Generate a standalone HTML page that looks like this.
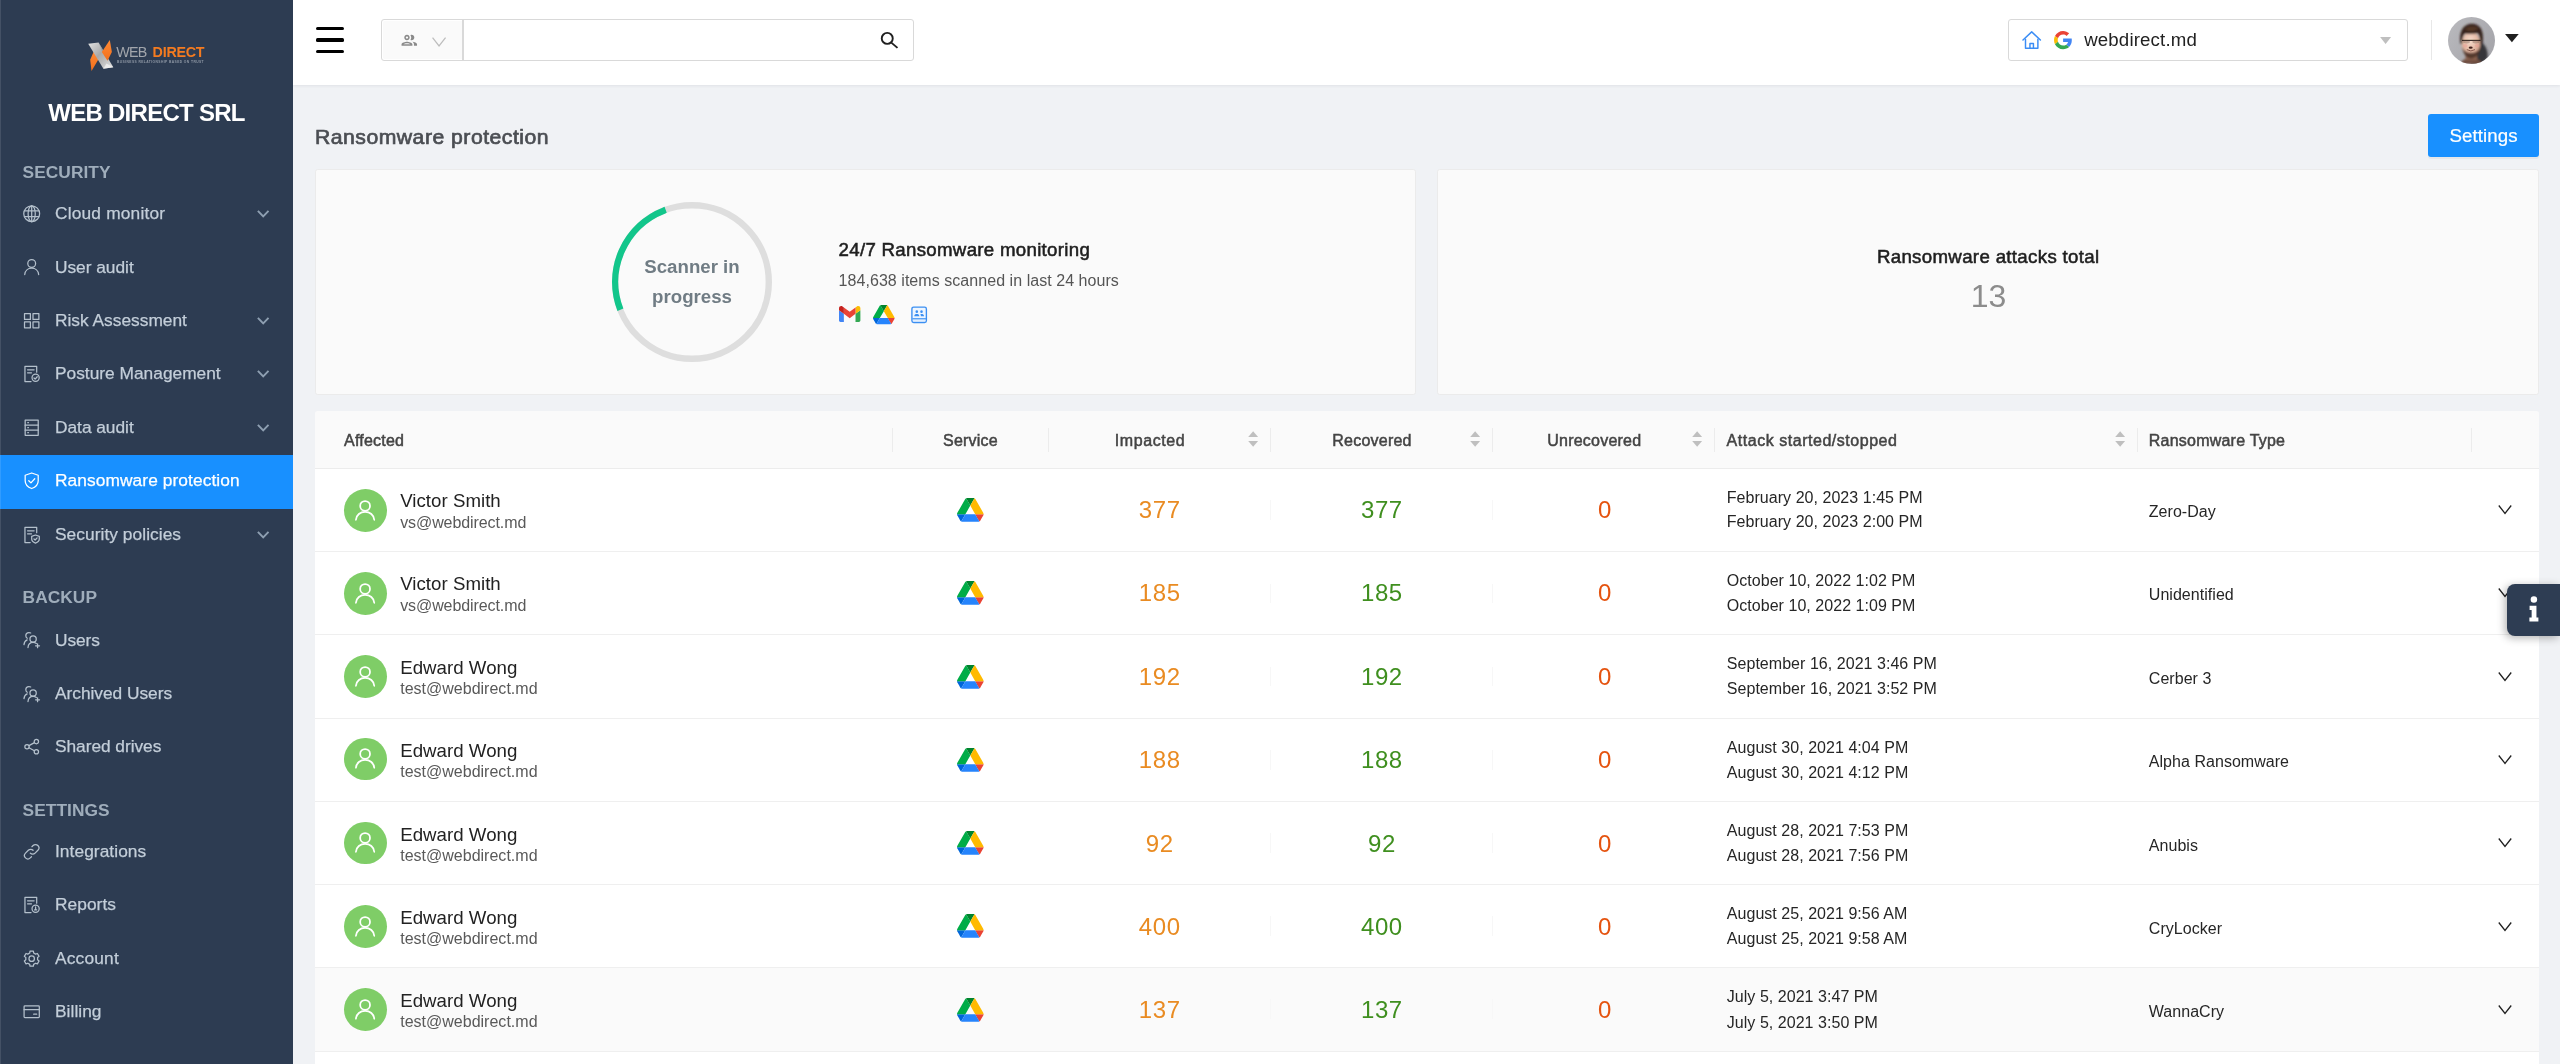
<!DOCTYPE html>
<html lang="en"><head><meta charset="utf-8"><title>Ransomware protection</title>
<style>
*{box-sizing:border-box;margin:0;padding:0}
html,body{width:2560px;height:1064px;overflow:hidden;background:#f0f2f5;font-family:"Liberation Sans",sans-serif}
body{will-change:transform;position:relative}
.t{position:absolute;white-space:nowrap;line-height:1}
.abs{position:absolute}
svg{position:absolute;overflow:visible}
#side{position:absolute;left:0;top:0;width:293px;height:1064px;background:#2d3c52}
#hdr{position:absolute;left:293px;top:0;width:2267px;height:85.400px;background:#fff;box-shadow:0 1px 3px rgba(0,21,41,.07)}
.ic{position:absolute;left:22.900px;width:17.400px;height:17.400px;fill:none;stroke:currentColor;stroke-width:1.150;stroke-linecap:round;stroke-linejoin:round}
.card{position:absolute;background:#fafafa;border:1.330px solid #ebebeb;border-radius:2.700px}
.row{position:absolute;left:315px;width:2224.400px;background:#fff;border-bottom:1.330px solid #efefef}
.vsep{position:absolute;width:1.330px}
</style></head><body>
<div id="hdr"></div>
<div class="abs" style="left:315.6px;top:27.25px;width:28.8px;height:3.1px;border-radius:1.5px;background:#000"></div>
<div class="abs" style="left:315.6px;top:38.45px;width:28.8px;height:3.1px;border-radius:1.5px;background:#000"></div>
<div class="abs" style="left:315.6px;top:49.75px;width:28.8px;height:3.1px;border-radius:1.5px;background:#000"></div>
<div class="abs" style="left:381.2px;top:19.4px;width:532.6px;height:41.3px;border:1.33px solid #d9d9d9;border-radius:3px;background:#fff"></div>
<div class="abs" style="left:382.5px;top:20.7px;width:80.4px;height:38.7px;background:#fafafa;border-radius:2px 0 0 2px"></div>
<div class="abs" style="left:462.2px;top:19.4px;width:1.33px;height:41.3px;background:#d9d9d9"></div>
<svg class="abs" viewBox="0 0 24 24" style="left:399.8px;top:31.2px;width:18.6px;height:18.6px;fill:#8a8a8a"><path d="M9 13.750c-2.340 0-7 1.170-7 3.500V19h14v-1.750c0-2.330-4.660-3.500-7-3.500zM4.340 17c.840-.580 2.870-1.250 4.660-1.250s3.820.670 4.660 1.250H4.340zM9 12c1.930 0 3.500-1.570 3.500-3.500S10.930 5 9 5 5.500 6.570 5.500 8.500 7.070 12 9 12zm0-5c.830 0 1.500.670 1.500 1.500S9.830 10 9 10s-1.500-.670-1.500-1.500S8.170 7 9 7zm7.040 6.810c1.160.840 1.960 1.960 1.960 3.440V19h4v-1.750c0-2.020-3.500-3.170-5.960-3.440zM15 12c1.930 0 3.500-1.570 3.500-3.500S16.930 5 15 5c-.540 0-1.040.130-1.500.350.630.890 1 1.980 1 3.150s-.370 2.260-1 3.150c.460.220.960.350 1.500.350z"/></svg>
<svg class="abs" viewBox="0 0 14 10" style="left:431.9px;top:36.6px;width:14.1px;height:10px;fill:none;stroke:#bdbdbd;stroke-width:1.25"><path d="M.5 .6l6.500 8.300 6.500-8.300"/></svg>
<svg class="abs" viewBox="0 0 20 20" style="left:879px;top:30px;width:20px;height:20px;fill:none;stroke:#1f1f1f;stroke-width:1.9;stroke-linecap:butt"><circle cx="8.250" cy="8.400" r="5.500"/><path d="M12.300 12.600l6.200 5.300"/></svg>
<div class="abs" style="left:2008.4px;top:19.4px;width:399.2px;height:41.3px;border:1.33px solid #d9d9d9;border-radius:3px;background:#fff"></div>
<svg class="abs" viewBox="0 0 20 19" style="left:2022.4px;top:30.9px;width:19.4px;height:18.4px;fill:none;stroke:#3b8df5;stroke-width:1.5;stroke-linejoin:round;stroke-linecap:round"><path d="M1 9.300L10 .9l9 8.400"/><path d="M3.600 8.400v9.500h12.800V8.400"/><path d="M8.200 17.900v-5h3.600v5"/></svg>
<svg class="abs" viewBox="0 0 48 48" style="left:2054px;top:30.8px;width:18.2px;height:18.2px"><path fill="#EA4335" d="M24 9.500c3.540 0 6.710 1.220 9.210 3.600l6.850-6.850C35.900 2.380 30.470 0 24 0 14.620 0 6.510 5.380 2.560 13.220l7.980 6.190C12.430 13.720 17.740 9.500 24 9.500z"/><path fill="#4285F4" d="M46.980 24.550c0-1.570-.150-3.090-.380-4.550H24v9.020h12.940c-.580 2.960-2.260 5.480-4.780 7.180l7.730 6c4.510-4.180 7.090-10.360 7.090-17.650z"/><path fill="#FBBC05" d="M10.530 28.590c-.480-1.450-.760-2.990-.760-4.590s.270-3.140.760-4.590l-7.980-6.190C.920 16.460 0 20.120 0 24c0 3.880.920 7.540 2.560 10.780l7.970-6.190z"/><path fill="#34A853" d="M24 48c6.480 0 11.930-2.130 15.890-5.810l-7.730-6c-2.150 1.450-4.920 2.300-8.160 2.300-6.260 0-11.570-4.220-13.470-9.910l-7.980 6.190C6.510 42.620 14.620 48 24 48z"/></svg>
<div class="t" style="left:2084.20px;top:31.10px;font-size:18.67px;color:#222;font-weight:400;letter-spacing:0.15px">webdirect.md</div>
<svg class="abs" viewBox="0 0 11 7" style="left:2379.6px;top:36.6px;width:11.2px;height:7px"><path d="M0 0h11L5.500 7z" fill="#bfbfbf"/></svg>
<div class="abs" style="left:2430.7px;top:20px;width:1.33px;height:40px;background:#e8e8e8"></div>
<svg class="abs" viewBox="0 0 47 47" style="left:2447.9px;top:16.6px;width:47px;height:47px">
<defs><clipPath id="avc"><circle cx="23.500" cy="23.500" r="23.500"/></clipPath>
<linearGradient id="avbg" x1="0" y1="0" x2="1" y2=".6"><stop offset="0" stop-color="#bababe"/><stop offset="1" stop-color="#a6a6ab"/></linearGradient>
<radialGradient id="avface" cx=".45" cy=".35" r=".7"><stop offset="0" stop-color="#f5dccd"/><stop offset=".55" stop-color="#e6bba6"/><stop offset="1" stop-color="#b98a72"/></radialGradient>
<filter id="avblur" x="-20%" y="-20%" width="140%" height="140%"><feGaussianBlur stdDeviation=".95"/></filter>
<filter id="avblur2" x="-20%" y="-20%" width="140%" height="140%"><feGaussianBlur stdDeviation=".55"/></filter></defs>
<g clip-path="url(#avc)">
<rect width="47" height="47" fill="url(#avbg)"/>
<g filter="url(#avblur)">
<path d="M30 24c6 1 10.500 8 9.500 17l-6 7h-9z" fill="#2c2c30" opacity=".92"/>
<path d="M13 47c0-3.500 4-6 10-6s10 2.500 11 6z" fill="#6f4e3f"/>
<rect x="17.500" y="36" width="11.500" height="7" fill="#8c6450"/>
<ellipse cx="23" cy="27.300" rx="9.300" ry="12.300" fill="url(#avface)"/>
<path d="M14.300 30c.9 7 4.200 11.400 8.900 11.400s8.200-4.400 9-11.400c-1.300 3.600-4.300 5.800-9 5.800s-7.600-2.200-8.900-5.800z" fill="#4a3026" opacity=".9"/>
<path d="M12.600 27C10.300 13 16.500 6.800 24 6.800S36.700 13 34.500 27L32 27C32.200 21 31.200 17.600 29.700 16.100C25.600 17.400 20 17.100 16.800 16.400C15 18.500 14.200 22 14.300 27z" fill="#35241b"/>
<path d="M16.500 13c3-4.600 11-5.200 15-.8-2.500-1-4.500 2.500-8 2.300-3 0-5-1.800-7-1.500z" fill="#7a5339" opacity=".45"/>
</g>
<g filter="url(#avblur2)">
<path d="M14 23.400h18.600" stroke="#2b211d" stroke-width="1.200" opacity=".92"/>
<path d="M15.300 23.600h6.500v2.100q-3.200 1.500-6.500 0zM24.600 23.600h6.500v2.100q-3.200 1.500-6.500 0z" fill="#6b4c42" opacity=".35"/>
<ellipse cx="22.700" cy="30.700" rx="2" ry="1.150" fill="#43231f"/>
<path d="M18.800 32.600q4 2.700 8.200 0" stroke="#6b3d33" stroke-width="1" fill="none" opacity=".75"/>
<ellipse cx="17.300" cy="28.800" rx="2.300" ry="1.700" fill="#e79a92" opacity=".45"/>
<ellipse cx="29" cy="28.800" rx="2.300" ry="1.700" fill="#e79a92" opacity=".45"/>
</g></g></svg>
<svg class="abs" viewBox="0 0 14 8.500" style="left:2505.4px;top:34px;width:13.8px;height:8.300px"><path d="M0 0h14L7 8.500z" fill="#1f1f1f"/></svg>
<div class="t" style="left:315.30px;top:126.60px;font-size:20.2px;color:#4b4e53;font-weight:400;letter-spacing:0.46px;-webkit-text-stroke:0.68px currentColor;transform:scaleX(1.05);transform-origin:0 50%">Ransomware protection</div>
<div class="abs" style="left:2428px;top:114px;width:111.300px;height:42.700px;background:#1890ff;border-radius:3px;box-shadow:0 2px 0 rgba(0,0,0,.045)"></div>
<div class="t" style="left:2483.60px;transform:translateX(-50%);top:126.80px;font-size:18.67px;color:#fff;font-weight:400;letter-spacing:0.1px;-webkit-text-stroke:0.2px currentColor">Settings</div>
<div class="card" style="left:315px;top:169px;width:1100.600px;height:225.800px"></div>
<div class="card" style="left:1437.300px;top:169px;width:1102.100px;height:225.800px"></div>
<svg class="abs" viewBox="0 0 160 160" style="left:612px;top:201.800px;width:160px;height:160px;fill:none;stroke-width:6.400"><circle cx="80" cy="80" r="76.800" stroke="#dedede"/><circle cx="80" cy="80" r="76.800" stroke="#12c68b" stroke-dasharray="122 1000" transform="rotate(158.800 80 80)"/></svg>
<div class="t" style="left:692.00px;transform:translateX(-50%);top:257.70px;font-size:18.67px;color:#707c84;font-weight:700;letter-spacing:0px">Scanner in</div>
<div class="t" style="left:692.00px;transform:translateX(-50%);top:287.70px;font-size:18.67px;color:#707c84;font-weight:700;letter-spacing:0px">progress</div>
<div class="t" style="left:838.60px;top:240.50px;font-size:18.67px;color:#1f1f1f;font-weight:400;letter-spacing:0.3px;-webkit-text-stroke:0.55px currentColor">24/7 Ransomware monitoring</div>
<div class="t" style="left:838.60px;top:272.76px;font-size:16px;color:#555;font-weight:400;letter-spacing:0.05px">184,638 items scanned in last 24 hours</div>
<svg class="abs" viewBox="52 42 88 66" style="left:838.800px;top:305.900px;width:21.400px;height:16.100px"><path fill="#4285f4" d="M58 108h14V74L52 59v43c0 3.320 2.690 6 6 6"/><path fill="#34a853" d="M120 108h14c3.320 0 6-2.690 6-6V59l-20 15"/><path fill="#fbbc04" d="M120 48v26l20-15v-8c0-7.420-8.470-11.650-14.400-7.200"/><path fill="#ea4335" d="M72 74V48l24 18 24-18v26L96 92"/><path fill="#c5221f" d="M52 51v8l20 15V48l-5.600-4.200c-5.940-4.450-14.400-.220-14.400 7.200"/></svg>
<svg class="abs" viewBox="0 0 87.300 78" style="left:872.80px;top:304.95px;width:21.60px;height:19.30px"><path d="m6.600 66.850 3.850 6.650c.800 1.400 1.950 2.500 3.300 3.300l13.750-23.800h-27.500c0 1.550.400 3.100 1.200 4.500z" fill="#0066da"/><path d="m43.650 25-13.750-23.800c-1.350.800-2.500 1.900-3.300 3.300l-25.400 44a9.060 9.060 0 0 0 -1.200 4.500h27.500z" fill="#00ac47"/><path d="m73.550 76.800c1.350-.800 2.500-1.900 3.300-3.300l1.600-2.750 7.650-13.250c.800-1.400 1.200-2.950 1.200-4.500h-27.502l5.852 11.500z" fill="#ea4335"/><path d="m43.650 25 13.750-23.800c-1.350-.800-2.900-1.200-4.500-1.200h-18.500c-1.600 0-3.150.450-4.500 1.200z" fill="#00832d"/><path d="m59.800 53h-32.300l-13.750 23.800c1.350.800 2.900 1.200 4.500 1.200h50.800c1.600 0 3.150-.450 4.500-1.200z" fill="#2684fc"/><path d="m73.400 26.500-12.700-22c-.800-1.400-1.950-2.500-3.300-3.300l-13.750 23.800 16.150 28h27.450c0-1.550-.400-3.100-1.200-4.500z" fill="#ffba00"/></svg>
<svg class="abs" viewBox="0 0 18 19" style="left:910.600px;top:306px;width:16.300px;height:17.600px"><rect x="1" y="1" width="16" height="17" rx="2" fill="#eef6ff" stroke="#3b8ff2" stroke-width="1.500"/><path d="M1.500 13.900h15" stroke="#3b8ff2" stroke-width="1.300"/><path d="M2.200 16.300h13.600" stroke="#d5e8ff" stroke-width="1"/><circle cx="6.400" cy="6" r="1.400" fill="#3b8ff2"/><circle cx="11.600" cy="6" r="1.400" fill="#3b8ff2"/><path d="M3.600 11c0-1.600 1.300-2.300 2.800-2.300s2.800.7 2.800 2.300z" fill="#3b8ff2"/><path d="M10.300 8.900c.4-.2.800-.2 1.300-.2 1.500 0 2.800.7 2.800 2.300h-3.500c0-.9-.2-1.600-.6-2.100z" fill="#3b8ff2"/></svg>
<div class="t" style="left:1988.20px;transform:translateX(-50%);top:248.30px;font-size:18.67px;color:#1f1f1f;font-weight:400;letter-spacing:0.33px;-webkit-text-stroke:0.55px currentColor">Ransomware attacks total</div>
<div class="t" style="left:1988.60px;transform:translateX(-50%);top:279.81px;font-size:32px;color:#8c8c8c;font-weight:400;">13</div>
<div class="abs" style="left:315px;top:410.800px;width:2224.400px;height:58.500px;background:#fafafa;border-bottom:1.33px solid #ececec;border-radius:2.700px 2.700px 0 0"></div>
<div class="t" style="left:344.00px;top:432.56px;font-size:16px;color:#444;font-weight:400;letter-spacing:0.22px;-webkit-text-stroke:0.5px currentColor">Affected</div>
<div class="t" style="left:970.50px;transform:translateX(-50%);top:432.56px;font-size:16px;color:#444;font-weight:400;letter-spacing:0.22px;-webkit-text-stroke:0.5px currentColor">Service</div>
<div class="t" style="left:1150.00px;transform:translateX(-50%);top:432.56px;font-size:16px;color:#444;font-weight:400;letter-spacing:0.57px;-webkit-text-stroke:0.5px currentColor">Impacted</div>
<div class="t" style="left:1372.00px;transform:translateX(-50%);top:432.56px;font-size:16px;color:#444;font-weight:400;letter-spacing:0.22px;-webkit-text-stroke:0.5px currentColor">Recovered</div>
<div class="t" style="left:1594.30px;transform:translateX(-50%);top:432.56px;font-size:16px;color:#444;font-weight:400;letter-spacing:0.22px;-webkit-text-stroke:0.5px currentColor">Unrecovered</div>
<div class="t" style="left:1726.60px;top:432.56px;font-size:16px;color:#444;font-weight:400;letter-spacing:0.53px;-webkit-text-stroke:0.5px currentColor">Attack started/stopped</div>
<div class="t" style="left:2148.80px;top:432.56px;font-size:16px;color:#444;font-weight:400;letter-spacing:0.22px;-webkit-text-stroke:0.5px currentColor">Ransomware Type</div>
<div class="vsep" style="left:891.64px;top:427.500px;height:24.500px;background:#ececec"></div>
<div class="vsep" style="left:1047.64px;top:427.500px;height:24.500px;background:#ececec"></div>
<div class="vsep" style="left:1269.74px;top:427.500px;height:24.500px;background:#ececec"></div>
<div class="vsep" style="left:1491.84px;top:427.500px;height:24.500px;background:#ececec"></div>
<div class="vsep" style="left:1713.94px;top:427.500px;height:24.500px;background:#ececec"></div>
<div class="vsep" style="left:2136.54px;top:427.500px;height:24.500px;background:#ececec"></div>
<div class="vsep" style="left:2470.64px;top:427.500px;height:24.500px;background:#ececec"></div>
<svg class="abs" viewBox="0 0 10.300 16" style="left:1247.90px;top:431.40px;width:10.300px;height:16px"><path d="M5.150 0.200L10.100 6H.2z" fill="#bfbfbf"/><path d="M5.150 15.800L10.100 10H.2z" fill="#bfbfbf"/></svg>
<svg class="abs" viewBox="0 0 10.300 16" style="left:1469.90px;top:431.40px;width:10.300px;height:16px"><path d="M5.150 0.200L10.100 6H.2z" fill="#bfbfbf"/><path d="M5.150 15.800L10.100 10H.2z" fill="#bfbfbf"/></svg>
<svg class="abs" viewBox="0 0 10.300 16" style="left:1692.00px;top:431.40px;width:10.300px;height:16px"><path d="M5.150 0.200L10.100 6H.2z" fill="#bfbfbf"/><path d="M5.150 15.800L10.100 10H.2z" fill="#bfbfbf"/></svg>
<svg class="abs" viewBox="0 0 10.300 16" style="left:2114.70px;top:431.40px;width:10.300px;height:16px"><path d="M5.150 0.200L10.100 6H.2z" fill="#bfbfbf"/><path d="M5.150 15.800L10.100 10H.2z" fill="#bfbfbf"/></svg>
<div class="row" style="top:469.30px;height:82.86px;background:#fff"></div>
<div class="vsep" style="left:1269.74px;top:500.40px;height:19.600px;background:#f7f7f7"></div>
<div class="vsep" style="left:1491.84px;top:500.40px;height:19.600px;background:#f7f7f7"></div>
<div class="abs" style="left:344px;top:489.00px;width:42.800px;height:42.800px;border-radius:50%;background:#7fcd67"></div>
<svg class="abs" viewBox="0 0 16 16" style="left:354.300px;top:498.80px;width:22.200px;height:22.200px;fill:none;stroke:#fff;stroke-width:1.250;stroke-linecap:round"><circle cx="8" cy="5" r="3.550"/><path d="M1.400 15c.3-3.500 3.100-5.700 6.600-5.700s6.300 2.200 6.600 5.700"/></svg>
<div class="t" style="left:400.20px;top:492.20px;font-size:18.67px;color:#222;font-weight:400;letter-spacing:0.03px">Victor Smith</div>
<div class="t" style="left:400.20px;top:514.76px;font-size:16px;color:#595959;font-weight:400;letter-spacing:-0.09px">vs@webdirect.md</div>
<svg class="abs" viewBox="0 0 87.300 78" style="left:956.90px;top:498.02px;width:26.60px;height:23.77px"><path d="m6.600 66.850 3.850 6.650c.800 1.400 1.950 2.500 3.300 3.300l13.750-23.800h-27.500c0 1.550.400 3.100 1.200 4.500z" fill="#0066da"/><path d="m43.650 25-13.750-23.800c-1.350.800-2.500 1.900-3.300 3.300l-25.400 44a9.060 9.060 0 0 0 -1.200 4.500h27.500z" fill="#00ac47"/><path d="m73.550 76.800c1.350-.800 2.500-1.900 3.300-3.300l1.600-2.750 7.650-13.250c.800-1.400 1.200-2.950 1.200-4.500h-27.502l5.852 11.500z" fill="#ea4335"/><path d="m43.650 25 13.750-23.800c-1.350-.800-2.900-1.200-4.500-1.200h-18.500c-1.600 0-3.150.450-4.500 1.200z" fill="#00832d"/><path d="m59.800 53h-32.300l-13.750 23.800c1.350.800 2.900 1.200 4.500 1.200h50.800c1.600 0 3.150-.450 4.500-1.200z" fill="#2684fc"/><path d="m73.400 26.500-12.700-22c-.800-1.400-1.950-2.500-3.300-3.300l-13.750 23.800 16.150 28h27.450c0-1.550-.400-3.100-1.200-4.500z" fill="#ffba00"/></svg>
<div class="t" style="left:1159.70px;transform:translateX(-50%);top:497.78px;font-size:24px;color:#e98b22;font-weight:400;letter-spacing:0.6px">377</div>
<div class="t" style="left:1381.90px;transform:translateX(-50%);top:497.78px;font-size:24px;color:#3f8f1f;font-weight:400;letter-spacing:0.6px">377</div>
<div class="t" style="left:1604.60px;transform:translateX(-50%);top:497.78px;font-size:24px;color:#e5530f;font-weight:400;">0</div>
<div class="t" style="left:1726.80px;top:489.56px;font-size:16px;color:#262626;font-weight:400;letter-spacing:0.04px">February 20, 2023 1:45 PM</div>
<div class="t" style="left:1726.80px;top:514.36px;font-size:16px;color:#262626;font-weight:400;letter-spacing:0.04px">February 20, 2023 2:00 PM</div>
<div class="t" style="left:2148.80px;top:504.16px;font-size:16px;color:#262626;font-weight:400;letter-spacing:0.04px">Zero-Day</div>
<svg class="abs" viewBox="0 0 14 10" style="left:2498px;top:505.20px;width:14px;height:9.600px;fill:none;stroke:#1f1f1f;stroke-width:1.350"><path d="M.500 .500l6.500 8.200 6.500-8.200"/></svg>
<div class="row" style="top:552.16px;height:83.20px;background:#fff"></div>
<div class="vsep" style="left:1269.74px;top:583.57px;height:19.600px;background:#f7f7f7"></div>
<div class="vsep" style="left:1491.84px;top:583.57px;height:19.600px;background:#f7f7f7"></div>
<div class="abs" style="left:344px;top:572.17px;width:42.800px;height:42.800px;border-radius:50%;background:#7fcd67"></div>
<svg class="abs" viewBox="0 0 16 16" style="left:354.300px;top:581.97px;width:22.200px;height:22.200px;fill:none;stroke:#fff;stroke-width:1.250;stroke-linecap:round"><circle cx="8" cy="5" r="3.550"/><path d="M1.400 15c.3-3.500 3.100-5.700 6.600-5.700s6.300 2.200 6.600 5.700"/></svg>
<div class="t" style="left:400.20px;top:575.37px;font-size:18.67px;color:#222;font-weight:400;letter-spacing:0.03px">Victor Smith</div>
<div class="t" style="left:400.20px;top:597.93px;font-size:16px;color:#595959;font-weight:400;letter-spacing:-0.09px">vs@webdirect.md</div>
<svg class="abs" viewBox="0 0 87.300 78" style="left:956.90px;top:581.19px;width:26.60px;height:23.77px"><path d="m6.600 66.850 3.850 6.650c.800 1.400 1.950 2.500 3.300 3.300l13.750-23.800h-27.500c0 1.550.400 3.100 1.200 4.500z" fill="#0066da"/><path d="m43.650 25-13.750-23.800c-1.350.800-2.500 1.900-3.300 3.300l-25.400 44a9.060 9.060 0 0 0 -1.200 4.500h27.500z" fill="#00ac47"/><path d="m73.550 76.800c1.350-.800 2.500-1.900 3.300-3.300l1.600-2.750 7.650-13.250c.800-1.400 1.200-2.950 1.200-4.500h-27.502l5.852 11.500z" fill="#ea4335"/><path d="m43.650 25 13.750-23.800c-1.350-.800-2.900-1.200-4.500-1.200h-18.500c-1.600 0-3.150.450-4.500 1.200z" fill="#00832d"/><path d="m59.800 53h-32.300l-13.750 23.800c1.350.800 2.900 1.200 4.500 1.200h50.800c1.600 0 3.150-.450 4.500-1.200z" fill="#2684fc"/><path d="m73.400 26.500-12.700-22c-.800-1.400-1.950-2.500-3.300-3.300l-13.750 23.800 16.150 28h27.450c0-1.550-.400-3.100-1.200-4.500z" fill="#ffba00"/></svg>
<div class="t" style="left:1159.70px;transform:translateX(-50%);top:580.95px;font-size:24px;color:#e98b22;font-weight:400;letter-spacing:0.6px">185</div>
<div class="t" style="left:1381.90px;transform:translateX(-50%);top:580.95px;font-size:24px;color:#3f8f1f;font-weight:400;letter-spacing:0.6px">185</div>
<div class="t" style="left:1604.60px;transform:translateX(-50%);top:580.95px;font-size:24px;color:#e5530f;font-weight:400;">0</div>
<div class="t" style="left:1726.80px;top:572.73px;font-size:16px;color:#262626;font-weight:400;letter-spacing:0.04px">October 10, 2022 1:02 PM</div>
<div class="t" style="left:1726.80px;top:597.53px;font-size:16px;color:#262626;font-weight:400;letter-spacing:0.04px">October 10, 2022 1:09 PM</div>
<div class="t" style="left:2148.80px;top:587.33px;font-size:16px;color:#262626;font-weight:400;letter-spacing:0.04px">Unidentified</div>
<svg class="abs" viewBox="0 0 14 10" style="left:2498px;top:588.37px;width:14px;height:9.600px;fill:none;stroke:#1f1f1f;stroke-width:1.350"><path d="M.500 .500l6.500 8.200 6.500-8.200"/></svg>
<div class="row" style="top:635.37px;height:83.70px;background:#fff"></div>
<div class="vsep" style="left:1269.74px;top:666.74px;height:19.600px;background:#f7f7f7"></div>
<div class="vsep" style="left:1491.84px;top:666.74px;height:19.600px;background:#f7f7f7"></div>
<div class="abs" style="left:344px;top:655.34px;width:42.800px;height:42.800px;border-radius:50%;background:#7fcd67"></div>
<svg class="abs" viewBox="0 0 16 16" style="left:354.300px;top:665.14px;width:22.200px;height:22.200px;fill:none;stroke:#fff;stroke-width:1.250;stroke-linecap:round"><circle cx="8" cy="5" r="3.550"/><path d="M1.400 15c.3-3.500 3.100-5.700 6.600-5.700s6.300 2.200 6.600 5.700"/></svg>
<div class="t" style="left:400.20px;top:658.54px;font-size:18.67px;color:#222;font-weight:400;letter-spacing:0.03px">Edward Wong</div>
<div class="t" style="left:400.20px;top:681.10px;font-size:16px;color:#595959;font-weight:400;letter-spacing:0.01px">test@webdirect.md</div>
<svg class="abs" viewBox="0 0 87.300 78" style="left:956.90px;top:664.86px;width:26.60px;height:23.77px"><path d="m6.600 66.850 3.850 6.650c.800 1.400 1.950 2.500 3.300 3.300l13.750-23.800h-27.500c0 1.550.400 3.100 1.200 4.500z" fill="#0066da"/><path d="m43.650 25-13.750-23.800c-1.350.800-2.500 1.900-3.300 3.300l-25.400 44a9.060 9.060 0 0 0 -1.200 4.500h27.500z" fill="#00ac47"/><path d="m73.550 76.800c1.350-.800 2.500-1.900 3.300-3.300l1.600-2.750 7.650-13.250c.800-1.400 1.200-2.950 1.200-4.500h-27.502l5.852 11.500z" fill="#ea4335"/><path d="m43.650 25 13.750-23.800c-1.350-.800-2.900-1.200-4.500-1.200h-18.500c-1.600 0-3.150.450-4.500 1.200z" fill="#00832d"/><path d="m59.800 53h-32.300l-13.750 23.800c1.350.800 2.900 1.200 4.500 1.200h50.800c1.600 0 3.150-.450 4.500-1.200z" fill="#2684fc"/><path d="m73.400 26.500-12.700-22c-.800-1.400-1.950-2.500-3.300-3.300l-13.750 23.800 16.150 28h27.450c0-1.550-.400-3.100-1.200-4.500z" fill="#ffba00"/></svg>
<div class="t" style="left:1159.70px;transform:translateX(-50%);top:665.12px;font-size:24px;color:#e98b22;font-weight:400;letter-spacing:0.6px">192</div>
<div class="t" style="left:1381.90px;transform:translateX(-50%);top:665.12px;font-size:24px;color:#3f8f1f;font-weight:400;letter-spacing:0.6px">192</div>
<div class="t" style="left:1604.60px;transform:translateX(-50%);top:665.12px;font-size:24px;color:#e5530f;font-weight:400;">0</div>
<div class="t" style="left:1726.80px;top:655.90px;font-size:16px;color:#262626;font-weight:400;letter-spacing:0.04px">September 16, 2021 3:46 PM</div>
<div class="t" style="left:1726.80px;top:680.70px;font-size:16px;color:#262626;font-weight:400;letter-spacing:0.04px">September 16, 2021 3:52 PM</div>
<div class="t" style="left:2148.80px;top:670.50px;font-size:16px;color:#262626;font-weight:400;letter-spacing:0.04px">Cerber 3</div>
<svg class="abs" viewBox="0 0 14 10" style="left:2498px;top:671.54px;width:14px;height:9.600px;fill:none;stroke:#1f1f1f;stroke-width:1.350"><path d="M.500 .500l6.500 8.200 6.500-8.200"/></svg>
<div class="row" style="top:719.06px;height:82.80px;background:#fff"></div>
<div class="vsep" style="left:1269.74px;top:749.91px;height:19.600px;background:#f7f7f7"></div>
<div class="vsep" style="left:1491.84px;top:749.91px;height:19.600px;background:#f7f7f7"></div>
<div class="abs" style="left:344px;top:737.51px;width:42.800px;height:42.800px;border-radius:50%;background:#7fcd67"></div>
<svg class="abs" viewBox="0 0 16 16" style="left:354.300px;top:747.31px;width:22.200px;height:22.200px;fill:none;stroke:#fff;stroke-width:1.250;stroke-linecap:round"><circle cx="8" cy="5" r="3.550"/><path d="M1.400 15c.3-3.500 3.100-5.700 6.600-5.700s6.300 2.200 6.600 5.700"/></svg>
<div class="t" style="left:400.20px;top:741.71px;font-size:18.67px;color:#222;font-weight:400;letter-spacing:0.03px">Edward Wong</div>
<div class="t" style="left:400.20px;top:764.27px;font-size:16px;color:#595959;font-weight:400;letter-spacing:0.01px">test@webdirect.md</div>
<svg class="abs" viewBox="0 0 87.300 78" style="left:956.90px;top:748.03px;width:26.60px;height:23.77px"><path d="m6.600 66.850 3.850 6.650c.800 1.400 1.950 2.500 3.300 3.300l13.750-23.800h-27.500c0 1.550.400 3.100 1.200 4.500z" fill="#0066da"/><path d="m43.650 25-13.750-23.800c-1.350.800-2.500 1.900-3.300 3.300l-25.400 44a9.060 9.060 0 0 0 -1.200 4.500h27.500z" fill="#00ac47"/><path d="m73.550 76.800c1.350-.800 2.500-1.900 3.300-3.300l1.600-2.750 7.650-13.250c.800-1.400 1.200-2.950 1.200-4.500h-27.502l5.852 11.500z" fill="#ea4335"/><path d="m43.650 25 13.750-23.800c-1.350-.800-2.900-1.200-4.500-1.200h-18.500c-1.600 0-3.150.450-4.500 1.200z" fill="#00832d"/><path d="m59.800 53h-32.300l-13.750 23.800c1.350.800 2.900 1.200 4.500 1.200h50.800c1.600 0 3.150-.450 4.500-1.200z" fill="#2684fc"/><path d="m73.400 26.500-12.700-22c-.800-1.400-1.950-2.500-3.300-3.300l-13.750 23.800 16.150 28h27.450c0-1.550-.400-3.100-1.200-4.500z" fill="#ffba00"/></svg>
<div class="t" style="left:1159.70px;transform:translateX(-50%);top:748.29px;font-size:24px;color:#e98b22;font-weight:400;letter-spacing:0.6px">188</div>
<div class="t" style="left:1381.90px;transform:translateX(-50%);top:748.29px;font-size:24px;color:#3f8f1f;font-weight:400;letter-spacing:0.6px">188</div>
<div class="t" style="left:1604.60px;transform:translateX(-50%);top:748.29px;font-size:24px;color:#e5530f;font-weight:400;">0</div>
<div class="t" style="left:1726.80px;top:739.87px;font-size:16px;color:#262626;font-weight:400;letter-spacing:0.04px">August 30, 2021 4:04 PM</div>
<div class="t" style="left:1726.80px;top:765.12px;font-size:16px;color:#262626;font-weight:400;letter-spacing:0.04px">August 30, 2021 4:12 PM</div>
<div class="t" style="left:2148.80px;top:753.67px;font-size:16px;color:#262626;font-weight:400;letter-spacing:0.04px">Alpha Ransomware</div>
<svg class="abs" viewBox="0 0 14 10" style="left:2498px;top:754.71px;width:14px;height:9.600px;fill:none;stroke:#1f1f1f;stroke-width:1.350"><path d="M.500 .500l6.500 8.200 6.500-8.200"/></svg>
<div class="row" style="top:801.87px;height:83.00px;background:#fff"></div>
<div class="vsep" style="left:1269.74px;top:833.08px;height:19.600px;background:#f7f7f7"></div>
<div class="vsep" style="left:1491.84px;top:833.08px;height:19.600px;background:#f7f7f7"></div>
<div class="abs" style="left:344px;top:821.68px;width:42.800px;height:42.800px;border-radius:50%;background:#7fcd67"></div>
<svg class="abs" viewBox="0 0 16 16" style="left:354.300px;top:831.48px;width:22.200px;height:22.200px;fill:none;stroke:#fff;stroke-width:1.250;stroke-linecap:round"><circle cx="8" cy="5" r="3.550"/><path d="M1.400 15c.3-3.500 3.100-5.700 6.600-5.700s6.300 2.200 6.600 5.700"/></svg>
<div class="t" style="left:400.20px;top:825.88px;font-size:18.67px;color:#222;font-weight:400;letter-spacing:0.03px">Edward Wong</div>
<div class="t" style="left:400.20px;top:848.44px;font-size:16px;color:#595959;font-weight:400;letter-spacing:0.01px">test@webdirect.md</div>
<svg class="abs" viewBox="0 0 87.300 78" style="left:956.90px;top:830.70px;width:26.60px;height:23.77px"><path d="m6.600 66.850 3.850 6.650c.800 1.400 1.950 2.500 3.300 3.300l13.750-23.800h-27.500c0 1.550.400 3.100 1.200 4.500z" fill="#0066da"/><path d="m43.650 25-13.750-23.800c-1.350.800-2.500 1.900-3.300 3.300l-25.400 44a9.060 9.060 0 0 0 -1.200 4.500h27.500z" fill="#00ac47"/><path d="m73.550 76.800c1.350-.800 2.500-1.900 3.300-3.300l1.600-2.750 7.650-13.250c.800-1.400 1.200-2.950 1.200-4.500h-27.502l5.852 11.500z" fill="#ea4335"/><path d="m43.650 25 13.750-23.800c-1.350-.800-2.900-1.200-4.500-1.200h-18.500c-1.600 0-3.150.450-4.500 1.200z" fill="#00832d"/><path d="m59.800 53h-32.300l-13.750 23.800c1.350.800 2.900 1.200 4.500 1.200h50.800c1.600 0 3.150-.450 4.500-1.200z" fill="#2684fc"/><path d="m73.400 26.500-12.700-22c-.800-1.400-1.950-2.500-3.300-3.300l-13.750 23.800 16.150 28h27.450c0-1.550-.400-3.100-1.200-4.500z" fill="#ffba00"/></svg>
<div class="t" style="left:1159.70px;transform:translateX(-50%);top:832.46px;font-size:24px;color:#e98b22;font-weight:400;letter-spacing:0.6px">92</div>
<div class="t" style="left:1381.90px;transform:translateX(-50%);top:832.46px;font-size:24px;color:#3f8f1f;font-weight:400;letter-spacing:0.6px">92</div>
<div class="t" style="left:1604.60px;transform:translateX(-50%);top:832.46px;font-size:24px;color:#e5530f;font-weight:400;">0</div>
<div class="t" style="left:1726.80px;top:823.04px;font-size:16px;color:#262626;font-weight:400;letter-spacing:0.04px">August 28, 2021 7:53 PM</div>
<div class="t" style="left:1726.80px;top:847.84px;font-size:16px;color:#262626;font-weight:400;letter-spacing:0.04px">August 28, 2021 7:56 PM</div>
<div class="t" style="left:2148.80px;top:837.64px;font-size:16px;color:#262626;font-weight:400;letter-spacing:0.04px">Anubis</div>
<svg class="abs" viewBox="0 0 14 10" style="left:2498px;top:837.88px;width:14px;height:9.600px;fill:none;stroke:#1f1f1f;stroke-width:1.350"><path d="M.500 .500l6.500 8.200 6.500-8.200"/></svg>
<div class="row" style="top:884.87px;height:83.10px;background:#fff"></div>
<div class="vsep" style="left:1269.74px;top:916.25px;height:19.600px;background:#f7f7f7"></div>
<div class="vsep" style="left:1491.84px;top:916.25px;height:19.600px;background:#f7f7f7"></div>
<div class="abs" style="left:344px;top:904.85px;width:42.800px;height:42.800px;border-radius:50%;background:#7fcd67"></div>
<svg class="abs" viewBox="0 0 16 16" style="left:354.300px;top:914.65px;width:22.200px;height:22.200px;fill:none;stroke:#fff;stroke-width:1.250;stroke-linecap:round"><circle cx="8" cy="5" r="3.550"/><path d="M1.400 15c.3-3.500 3.100-5.700 6.600-5.700s6.300 2.200 6.600 5.700"/></svg>
<div class="t" style="left:400.20px;top:909.05px;font-size:18.67px;color:#222;font-weight:400;letter-spacing:0.03px">Edward Wong</div>
<div class="t" style="left:400.20px;top:930.61px;font-size:16px;color:#595959;font-weight:400;letter-spacing:0.01px">test@webdirect.md</div>
<svg class="abs" viewBox="0 0 87.300 78" style="left:956.90px;top:914.37px;width:26.60px;height:23.77px"><path d="m6.600 66.850 3.850 6.650c.800 1.400 1.950 2.500 3.300 3.300l13.750-23.800h-27.500c0 1.550.400 3.100 1.200 4.500z" fill="#0066da"/><path d="m43.650 25-13.750-23.800c-1.350.800-2.500 1.900-3.300 3.300l-25.400 44a9.060 9.060 0 0 0 -1.200 4.500h27.500z" fill="#00ac47"/><path d="m73.550 76.800c1.350-.800 2.500-1.900 3.300-3.300l1.600-2.750 7.650-13.250c.800-1.400 1.200-2.950 1.200-4.500h-27.502l5.852 11.500z" fill="#ea4335"/><path d="m43.650 25 13.750-23.800c-1.350-.800-2.900-1.200-4.500-1.200h-18.500c-1.600 0-3.150.450-4.500 1.200z" fill="#00832d"/><path d="m59.800 53h-32.300l-13.750 23.800c1.350.800 2.900 1.200 4.500 1.200h50.800c1.600 0 3.150-.450 4.500-1.200z" fill="#2684fc"/><path d="m73.400 26.500-12.700-22c-.800-1.400-1.950-2.500-3.300-3.300l-13.750 23.800 16.150 28h27.450c0-1.550-.400-3.100-1.200-4.500z" fill="#ffba00"/></svg>
<div class="t" style="left:1159.70px;transform:translateX(-50%);top:914.63px;font-size:24px;color:#e98b22;font-weight:400;letter-spacing:0.6px">400</div>
<div class="t" style="left:1381.90px;transform:translateX(-50%);top:914.63px;font-size:24px;color:#3f8f1f;font-weight:400;letter-spacing:0.6px">400</div>
<div class="t" style="left:1604.60px;transform:translateX(-50%);top:914.63px;font-size:24px;color:#e5530f;font-weight:400;">0</div>
<div class="t" style="left:1726.80px;top:906.21px;font-size:16px;color:#262626;font-weight:400;letter-spacing:0.04px">August 25, 2021 9:56 AM</div>
<div class="t" style="left:1726.80px;top:931.01px;font-size:16px;color:#262626;font-weight:400;letter-spacing:0.04px">August 25, 2021 9:58 AM</div>
<div class="t" style="left:2148.80px;top:920.81px;font-size:16px;color:#262626;font-weight:400;letter-spacing:0.04px">CryLocker</div>
<svg class="abs" viewBox="0 0 14 10" style="left:2498px;top:922.25px;width:14px;height:9.600px;fill:none;stroke:#1f1f1f;stroke-width:1.350"><path d="M.500 .500l6.500 8.200 6.500-8.200"/></svg>
<div class="row" style="top:967.96px;height:83.90px;background:#fafafa"></div>
<div class="vsep" style="left:1269.74px;top:999.42px;height:19.600px;background:#f7f7f7"></div>
<div class="vsep" style="left:1491.84px;top:999.42px;height:19.600px;background:#f7f7f7"></div>
<div class="abs" style="left:344px;top:988.02px;width:42.800px;height:42.800px;border-radius:50%;background:#7fcd67"></div>
<svg class="abs" viewBox="0 0 16 16" style="left:354.300px;top:997.82px;width:22.200px;height:22.200px;fill:none;stroke:#fff;stroke-width:1.250;stroke-linecap:round"><circle cx="8" cy="5" r="3.550"/><path d="M1.400 15c.3-3.500 3.100-5.700 6.600-5.700s6.300 2.200 6.600 5.700"/></svg>
<div class="t" style="left:400.20px;top:992.22px;font-size:18.67px;color:#222;font-weight:400;letter-spacing:0.03px">Edward Wong</div>
<div class="t" style="left:400.20px;top:1013.78px;font-size:16px;color:#595959;font-weight:400;letter-spacing:0.01px">test@webdirect.md</div>
<svg class="abs" viewBox="0 0 87.300 78" style="left:956.90px;top:998.04px;width:26.60px;height:23.77px"><path d="m6.600 66.850 3.850 6.650c.800 1.400 1.950 2.500 3.300 3.300l13.750-23.800h-27.500c0 1.550.400 3.100 1.200 4.500z" fill="#0066da"/><path d="m43.650 25-13.750-23.800c-1.350.800-2.500 1.900-3.300 3.300l-25.400 44a9.060 9.060 0 0 0 -1.200 4.500h27.500z" fill="#00ac47"/><path d="m73.550 76.800c1.350-.800 2.500-1.900 3.300-3.300l1.600-2.750 7.650-13.250c.800-1.400 1.200-2.950 1.200-4.500h-27.502l5.852 11.500z" fill="#ea4335"/><path d="m43.650 25 13.750-23.800c-1.350-.800-2.900-1.200-4.500-1.200h-18.500c-1.600 0-3.150.450-4.500 1.200z" fill="#00832d"/><path d="m59.800 53h-32.300l-13.750 23.800c1.350.800 2.900 1.200 4.500 1.200h50.800c1.600 0 3.150-.450 4.500-1.200z" fill="#2684fc"/><path d="m73.400 26.500-12.700-22c-.800-1.400-1.950-2.500-3.300-3.300l-13.750 23.800 16.150 28h27.450c0-1.550-.400-3.100-1.200-4.500z" fill="#ffba00"/></svg>
<div class="t" style="left:1159.70px;transform:translateX(-50%);top:997.80px;font-size:24px;color:#e98b22;font-weight:400;letter-spacing:0.6px">137</div>
<div class="t" style="left:1381.90px;transform:translateX(-50%);top:997.80px;font-size:24px;color:#3f8f1f;font-weight:400;letter-spacing:0.6px">137</div>
<div class="t" style="left:1604.60px;transform:translateX(-50%);top:997.80px;font-size:24px;color:#e5530f;font-weight:400;">0</div>
<div class="t" style="left:1726.80px;top:988.58px;font-size:16px;color:#262626;font-weight:400;letter-spacing:0.04px">July 5, 2021 3:47 PM</div>
<div class="t" style="left:1726.80px;top:1015.08px;font-size:16px;color:#262626;font-weight:400;letter-spacing:0.04px">July 5, 2021 3:50 PM</div>
<div class="t" style="left:2148.80px;top:1003.98px;font-size:16px;color:#262626;font-weight:400;letter-spacing:0.04px">WannaCry</div>
<svg class="abs" viewBox="0 0 14 10" style="left:2498px;top:1005.42px;width:14px;height:9.600px;fill:none;stroke:#1f1f1f;stroke-width:1.350"><path d="M.500 .500l6.500 8.200 6.500-8.200"/></svg>
<div class="row" style="top:1051.87px;height:12.13px;border-bottom:0"></div>
<div class="abs" style="left:2507px;top:583.600px;width:53px;height:52.400px;background:#2e3d53;border-radius:8px 0 0 8px;box-shadow:-2px 2px 8px rgba(0,0,0,.3)"></div>
<svg class="abs" viewBox="0 0 10 26" style="left:2528.600px;top:596.300px;width:9.800px;height:26px"><circle cx="5" cy="3.300" r="3.300" fill="#fff"/><path d="M.6 9.800h7v11.800h2v4.200H.4v-4.200h2.300v-7.600H.6z" fill="#fff"/></svg>
<div id="side">
<svg class="abs" viewBox="0 0 30 36" style="left:86px;top:37px;width:30px;height:36px">
<defs><linearGradient id="lgg" x1="0" y1="0" x2="1" y2="1"><stop offset="0" stop-color="#e4e4e4"/><stop offset=".45" stop-color="#a9a9a9"/><stop offset=".6" stop-color="#b5b5b5"/><stop offset="1" stop-color="#e6e6e6"/></linearGradient>
<linearGradient id="lgo" x1="0" y1="0" x2="0" y2="1"><stop offset="0" stop-color="#ff8a35"/><stop offset="1" stop-color="#f26f1c"/></linearGradient></defs>
<polygon points="8.300,13.200 14.300,19.200 5.500,34.100 4.200,22.700" fill="url(#lgo)"/>
<polygon points="2.200,6.700 12.600,5.400 27.300,30.200 17.400,31.800" fill="url(#lgg)"/>
<polygon points="12.600,5.400 16.500,15.300 19.800,17.600" fill="#8f8f8f" opacity=".55"/>
<polygon points="23.800,3 25.900,15 21.500,23.800 15.800,15" fill="url(#lgo)"/>
<polygon points="17.400,31.800 27.300,30.200 20.500,26.500" fill="#f1f1f1" opacity=".8"/>
</svg>
<div class="t" style="left:116.300px;top:44.500px;font-size:14.300px;color:#a2a6ac;letter-spacing:-0.750px;font-weight:400">WEB</div>
<div class="t" style="left:152.600px;top:44.500px;font-size:14.300px;color:#f47b20;letter-spacing:-0.250px;font-weight:700">DIRECT</div>
<div class="t" style="left:117px;top:60.900px;font-size:3.300px;color:#8f98a5;letter-spacing:.410px;font-weight:700">BUSINESS RELATIONSHIP BASED ON TRUST</div>
<div class="t" style="left:146.50px;transform:translateX(-50%);top:100.68px;font-size:24px;color:#fff;font-weight:700;letter-spacing:-0.72px">WEB DIRECT SRL</div>
<div class="t" style="left:22.60px;top:164.08px;font-size:17.33px;color:#9fadbb;font-weight:700;letter-spacing:0.05px">SECURITY</div>
<svg class="ic" viewBox="0 0 16 16" style="top:204.90px;color:#b4c0cc"><circle cx="8" cy="8" r="7.3"/><ellipse cx="8" cy="8" rx="3.3" ry="7.3"/><path d="M8 .7v14.6M1.5 5.3h13M1.5 10.7h13"/></svg>
<div class="t" style="left:55.00px;top:205.08px;font-size:17.33px;color:#c3ced9;font-weight:400;letter-spacing:0.18px;-webkit-text-stroke:0.25px currentColor">Cloud monitor</div>
<svg class="abs" viewBox="0 0 12 8" style="left:256.6px;top:209.90px;width:12.4px;height:8.2px;fill:none;stroke:#8e9fb1;stroke-width:1.9;stroke-linecap:butt;stroke-linejoin:miter"><path d="M.8 .9l5.200 5.300 5.200-5.300"/></svg>
<svg class="ic" viewBox="0 0 16 16" style="top:258.35px;color:#b4c0cc"><circle cx="8" cy="5" r="3.6"/><path d="M1.6 15.2c.3-3.6 3-5.8 6.4-5.8s6.1 2.2 6.4 5.8"/></svg>
<div class="t" style="left:55.00px;top:258.53px;font-size:17.33px;color:#c3ced9;font-weight:400;letter-spacing:-0.03px;-webkit-text-stroke:0.25px currentColor">User audit</div>
<svg class="ic" viewBox="0 0 16 16" style="top:311.80px;color:#b4c0cc"><rect x="1.4" y="1.4" width="5.4" height="5.4"/><rect x="9.2" y="1.4" width="5.4" height="5.4"/><rect x="1.4" y="9.2" width="5.4" height="5.4"/><rect x="9.2" y="9.2" width="5.4" height="5.4"/></svg>
<div class="t" style="left:55.00px;top:311.98px;font-size:17.33px;color:#c3ced9;font-weight:400;letter-spacing:0.0px;-webkit-text-stroke:0.25px currentColor">Risk Assessment</div>
<svg class="abs" viewBox="0 0 12 8" style="left:256.6px;top:316.80px;width:12.4px;height:8.2px;fill:none;stroke:#8e9fb1;stroke-width:1.9;stroke-linecap:butt;stroke-linejoin:miter"><path d="M.8 .9l5.200 5.300 5.200-5.300"/></svg>
<svg class="ic" viewBox="0 0 16 16" style="top:365.25px;color:#b4c0cc"><path d="M12.6 6.6V1.2H1.8v14h5.6"/><path d="M4.2 4.4h6M4.2 7.2h3.6"/><circle cx="11.6" cy="11.8" r="3.3"/><path d="M10.1 11.9l1.1 1.1 1.9-2.2"/></svg>
<div class="t" style="left:55.00px;top:365.43px;font-size:17.33px;color:#c3ced9;font-weight:400;letter-spacing:0.0px;-webkit-text-stroke:0.25px currentColor">Posture Management</div>
<svg class="abs" viewBox="0 0 12 8" style="left:256.6px;top:370.25px;width:12.4px;height:8.2px;fill:none;stroke:#8e9fb1;stroke-width:1.9;stroke-linecap:butt;stroke-linejoin:miter"><path d="M.8 .9l5.200 5.300 5.200-5.300"/></svg>
<svg class="ic" viewBox="0 0 16 16" style="top:418.70px;color:#b4c0cc"><rect x="2" y="1" width="12" height="14"/><path d="M2 5.7h12M2 10.3h12"/><path d="M4.4 3.4h.6M4.4 8h.6M4.4 12.6h.6"/></svg>
<div class="t" style="left:55.00px;top:418.88px;font-size:17.33px;color:#c3ced9;font-weight:400;letter-spacing:-0.03px;-webkit-text-stroke:0.25px currentColor">Data audit</div>
<svg class="abs" viewBox="0 0 12 8" style="left:256.6px;top:423.70px;width:12.4px;height:8.2px;fill:none;stroke:#8e9fb1;stroke-width:1.9;stroke-linecap:butt;stroke-linejoin:miter"><path d="M.8 .9l5.200 5.300 5.200-5.300"/></svg>
<div class="abs" style="left:0;top:454.95px;width:293px;height:54px;background:#1890ff"></div>
<svg class="ic" viewBox="0 0 16 16" style="top:472.15px;color:#fff"><path d="M8 .9l6 2.1v5c0 3.4-2.4 5.9-6 7.2-3.6-1.3-6-3.8-6-7.200V3z"/><path d="M5.300 8l2 2 3.500-3.800"/></svg>
<div class="t" style="left:55.00px;top:472.33px;font-size:17.33px;color:#fff;font-weight:400;letter-spacing:0.08px;-webkit-text-stroke:0.25px currentColor">Ransomware protection</div>
<svg class="ic" viewBox="0 0 16 16" style="top:525.60px;color:#b4c0cc"><path d="M12.600 6.200V1.200H1.800v14h4.800"/><path d="M4.200 4.400h6M4.200 7.200h3.600"/><path d="M11.500 8.300l3.500 1.200v2.500c0 1.900-1.500 3.100-3.500 3.800-2-.7-3.500-1.900-3.500-3.800V9.500z"/><path d="M10.100 11.900l1.100 1 1.800-2"/></svg>
<div class="t" style="left:55.00px;top:525.78px;font-size:17.33px;color:#c3ced9;font-weight:400;letter-spacing:0.05px;-webkit-text-stroke:0.25px currentColor">Security policies</div>
<svg class="abs" viewBox="0 0 12 8" style="left:256.6px;top:530.60px;width:12.4px;height:8.2px;fill:none;stroke:#8e9fb1;stroke-width:1.9;stroke-linecap:butt;stroke-linejoin:miter"><path d="M.8 .9l5.200 5.300 5.200-5.300"/></svg>
<div class="t" style="left:22.60px;top:589.33px;font-size:17.33px;color:#9fadbb;font-weight:700;letter-spacing:0.05px">BACKUP</div>
<svg class="ic" viewBox="0 0 16 16" style="top:631.35px;color:#b4c0cc"><circle cx="9.300" cy="7.400" r="2.900"/><path d="M4.600 15.200c.2-3 2.200-4.700 4.700-4.700 1.200 0 2.200.4 3 1"/><path d="M13.400 11.800v3.600M11.600 13.600h3.600"/><path d="M7.100 1.800c-.5-.3-1-.4-1.600-.4-1.600 0-2.900 1.300-2.900 2.900 0 1 .5 1.900 1.300 2.400"/><path d="M.9 12.500c.2-2.100 1.200-3.600 2.900-4.300"/></svg>
<div class="t" style="left:55.00px;top:631.53px;font-size:17.33px;color:#c3ced9;font-weight:400;letter-spacing:-0.1px;-webkit-text-stroke:0.25px currentColor">Users</div>
<svg class="ic" viewBox="0 0 16 16" style="top:684.70px;color:#b4c0cc"><circle cx="9.300" cy="7.400" r="2.900"/><path d="M4.600 15.200c.2-3 2.200-4.700 4.700-4.700 1.200 0 2.200.4 3 1"/><path d="M13.400 11.800v3.600M11.600 13.600h3.600"/><path d="M7.100 1.800c-.5-.3-1-.4-1.600-.4-1.600 0-2.900 1.300-2.900 2.900 0 1 .5 1.900 1.300 2.400"/><path d="M.9 12.500c.2-2.100 1.200-3.600 2.900-4.300"/></svg>
<div class="t" style="left:55.00px;top:684.88px;font-size:17.33px;color:#c3ced9;font-weight:400;letter-spacing:-0.03px;-webkit-text-stroke:0.25px currentColor">Archived Users</div>
<svg class="ic" viewBox="0 0 16 16" style="top:738.05px;color:#b4c0cc"><circle cx="12.300" cy="3.300" r="2"/><circle cx="3.700" cy="8" r="2"/><circle cx="12.300" cy="12.700" r="2"/><path d="M5.500 7l5-2.700M5.500 9l5 2.700"/></svg>
<div class="t" style="left:55.00px;top:738.23px;font-size:17.33px;color:#c3ced9;font-weight:400;letter-spacing:-0.05px;-webkit-text-stroke:0.25px currentColor">Shared drives</div>
<div class="t" style="left:22.60px;top:801.93px;font-size:17.33px;color:#9fadbb;font-weight:700;letter-spacing:0.05px">SETTINGS</div>
<svg class="ic" viewBox="0 0 16 16" style="top:842.90px;color:#b4c0cc"><path d="M6.700 9.300a3.100 3.100 0 0 0 4.400 0l2.600-2.600a3.100 3.100 0 0 0-4.400-4.400L8.200 3.400"/><path d="M9.300 6.700a3.100 3.100 0 0 0-4.400 0L2.300 9.300a3.100 3.100 0 0 0 4.400 4.400l1.100-1.100"/></svg>
<div class="t" style="left:55.00px;top:843.08px;font-size:17.33px;color:#c3ced9;font-weight:400;letter-spacing:0.06px;-webkit-text-stroke:0.25px currentColor">Integrations</div>
<svg class="ic" viewBox="0 0 16 16" style="top:896.20px;color:#b4c0cc"><path d="M12.600 6.600V1.200H1.800v14h5.600"/><path d="M4.200 4.400h6M4.200 7.200h3.600"/><circle cx="11.600" cy="11.800" r="3.300"/><path d="M11.600 10.100v2.500M10.600 12.800h2"/></svg>
<div class="t" style="left:55.00px;top:896.38px;font-size:17.33px;color:#c3ced9;font-weight:400;letter-spacing:0.04px;-webkit-text-stroke:0.25px currentColor">Reports</div>
<svg class="ic" viewBox="0 0 16 16" style="top:949.50px;color:#b4c0cc"><path d="M6.17 2.81 L6.45 1.07 L9.55 1.07 L9.83 2.81 L11.57 3.82 L13.23 3.19 L14.78 5.88 L13.41 7.00 L13.41 9.00 L14.78 10.12 L13.23 12.81 L11.57 12.18 L9.83 13.19 L9.55 14.93 L6.45 14.93 L6.17 13.19 L4.43 12.18 L2.77 12.81 L1.22 10.12 L2.59 9.00 L2.59 7.00 L1.22 5.88 L2.77 3.19 L4.43 3.82Z"/><circle cx="8" cy="8" r="2.500"/></svg>
<div class="t" style="left:55.00px;top:949.68px;font-size:17.33px;color:#c3ced9;font-weight:400;letter-spacing:0.18px;-webkit-text-stroke:0.25px currentColor">Account</div>
<svg class="ic" viewBox="0 0 16 16" style="top:1002.80px;color:#b4c0cc"><rect x="1" y="2.600" width="14" height="10.800" rx=".8"/><path d="M1 6.200h14M9.800 10.300h2.800"/></svg>
<div class="t" style="left:55.00px;top:1002.98px;font-size:17.33px;color:#c3ced9;font-weight:400;letter-spacing:0.04px;-webkit-text-stroke:0.25px currentColor">Billing</div>
<div class="abs" style="left:0;top:0;width:1.200px;height:1064px;background:rgba(255,255,255,.11)"></div>
</div>
</body></html>
